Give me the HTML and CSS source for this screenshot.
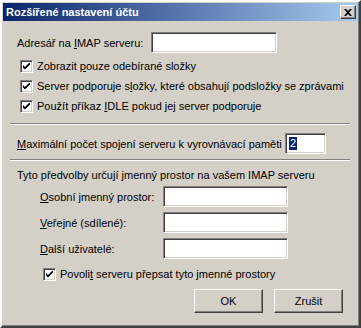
FILE: index.html
```html
<!DOCTYPE html>
<html lang="cs">
<head>
    <meta charset="UTF-8">
    <title>Rozšířené nastavení účtu</title>
    <link rel="stylesheet" href="styles.css">
</head>
<body>
    <div class="dialog">
        <div class="titlebar">
            <span class="title">Rozšířené nastavení účtu</span>
            <span class="close-btn">
                <svg width="8" height="7" viewBox="0 0 8 7"><path d="M0 0h2l2 2 2-2h2L5 3.5 8 7H6L4 5 2 7H0l3-3.5z" fill="#000"/></svg>
            </span>
        </div>

        <div class="content">
            <div class="row row-dir">
                <label class="lbl lbl-dir">Adresář na <u>I</u>MAP serveru:</label>
                <span class="field field-dir"></span>
            </div>

            <div class="checks">
                <div class="check-row">
                    <span class="box"><svg width="7" height="7" viewBox="0 0 7 7"><path d="M0 2l2 2 5-5v2.5l-5 5-2-2z" fill="#000"/></svg></span>
                    <span>Zobrazit <u>p</u>ouze odebírané složky</span>
                </div>
                <div class="check-row">
                    <span class="box"><svg width="7" height="7" viewBox="0 0 7 7"><path d="M0 2l2 2 5-5v2.5l-5 5-2-2z" fill="#000"/></svg></span>
                    <span>Server podporuje s<u>l</u>ožky, které obsahují podsložky se zprávami</span>
                </div>
                <div class="check-row">
                    <span class="box"><svg width="7" height="7" viewBox="0 0 7 7"><path d="M0 2l2 2 5-5v2.5l-5 5-2-2z" fill="#000"/></svg></span>
                    <span>Použít příkaz <u>I</u>DLE pokud jej server podporuje</span>
                </div>
            </div>

            <div class="sep sep-1"></div>

            <div class="row row-max">
                <label class="lbl lbl-max"><u>M</u>aximální počet spojení serveru k vyrovnávací paměti</label>
                <span class="field field-max"><span class="sel">2</span></span>
            </div>

            <div class="sep sep-2"></div>

            <div class="note">Tyto předvolby určují jmenný prostor na vašem IMAP serveru</div>

            <div class="ns">
                <div class="row">
                    <label class="lbl lbl-ns"><u>O</u>sobní jmenný prostor:</label>
                    <span class="field field-ns"></span>
                </div>
                <div class="row">
                    <label class="lbl lbl-ns"><u>V</u>eřejné (sdílené):</label>
                    <span class="field field-ns"></span>
                </div>
                <div class="row">
                    <label class="lbl lbl-ns"><u>D</u>alší uživatelé:</label>
                    <span class="field field-ns"></span>
                </div>
            </div>

            <div class="check-row check-allow">
                <span class="box"><svg width="7" height="7" viewBox="0 0 7 7"><path d="M0 2l2 2 5-5v2.5l-5 5-2-2z" fill="#000"/></svg></span>
                <span>Povoli<u>t</u> serveru přepsat tyto jmenné prostory</span>
            </div>

            <div class="buttons">
                <span class="btn">OK</span>
                <span class="btn">Zrušit</span>
            </div>
        </div>
    </div>
</body>
</html>
```

FILE: styles.css
```css
body {
    margin: 0;
    background-color: #d4d0c8;
    font-family: Tahoma, 'Liberation Sans', sans-serif;
    font-size: 11px;
    color: #000;
}
.dialog {
    width: 361px;
    height: 328px;
    box-sizing: border-box;
    padding: 1px;
    background-color: #d4d0c8;
    border-style: solid;
    border-width: 2px;
    border-color: #fff #404040 #404040 #fff;
    box-shadow: inset -1px -1px 0 #808080, inset 1px 1px 0 #d4d0c8;
}
.titlebar {
    height: 18px;
    display: flex;
    align-items: center;
    justify-content: space-between;
    padding: 0 2px 0 3px;
    background: linear-gradient(to right, #0a246a, #a6caf0);
}
.title {
    color: #fff;
    font-weight: bold;
    font-size: 11px;
}
.close-btn {
    width: 16px;
    height: 14px;
    box-sizing: border-box;
    display: flex;
    align-items: center;
    justify-content: center;
    background-color: #d4d0c8;
    border-style: solid;
    border-width: 1px;
    border-color: #fff #404040 #404040 #fff;
    box-shadow: inset -1px -1px 0 #808080;
}
.content {
    padding: 0 0 0 14px;
}
.row {
    display: flex;
    align-items: center;
}
.row-dir {
    margin-top: 11px;
}
.lbl {
    flex-shrink: 0;
    white-space: nowrap;
}
.lbl-dir {
    width: 134px;
}
.lbl-max {
    width: 268px;
}
.lbl-ns {
    width: 123px;
    margin-left: 23px;
}
.field {
    height: 21px;
    box-sizing: border-box;
    background-color: #fff;
    border-style: solid;
    border-width: 1px;
    border-color: #808080 #fff #fff #808080;
    box-shadow: inset 1px 1px 0 #404040, inset -1px -1px 0 #d4d0c8;
    display: flex;
    align-items: center;
    padding-left: 3px;
}
.field-dir {
    width: 126px;
}
.field-max {
    width: 41px;
}
.field-ns {
    width: 125px;
}
.sel {
    background-color: #0a246a;
    color: #fff;
    line-height: 13px;
    padding: 0 1px;
}
.checks {
    margin-top: 3px;
}
.check-row {
    height: 20px;
    display: flex;
    align-items: center;
    padding-left: 3px;
    white-space: nowrap;
}
.box {
    width: 13px;
    height: 13px;
    box-sizing: border-box;
    margin-right: 4px;
    flex-shrink: 0;
    background-color: #fff;
    border-style: solid;
    border-width: 1px;
    border-color: #808080 #fff #fff #808080;
    box-shadow: inset 1px 1px 0 #404040, inset -1px -1px 0 #d4d0c8;
    display: flex;
    align-items: center;
    justify-content: center;
}
.sep {
    height: 0;
    margin-left: -7px;
    margin-right: 8px;
    border-top: 1px solid #808080;
    border-bottom: 1px solid #fff;
}
.sep-1 {
    margin-top: 7px;
}
.row-max {
    margin-top: 8px;
}
.sep-2 {
    margin-top: 5px;
}
.note {
    margin-top: 7px;
    line-height: 14px;
}
.ns {
    margin-top: 4px;
    display: flex;
    flex-direction: column;
    gap: 5px;
}
.check-allow {
    margin-top: 5px;
    padding-left: 26px;
}
.buttons {
    margin-top: 5px;
    display: flex;
    justify-content: flex-end;
    gap: 11px;
    padding-right: 15px;
}
.btn {
    width: 69px;
    height: 24px;
    box-sizing: border-box;
    display: flex;
    align-items: center;
    justify-content: center;
    border-style: solid;
    border-width: 1px;
    border-color: #fff #404040 #404040 #fff;
    box-shadow: inset -1px -1px 0 #808080;
}
```
